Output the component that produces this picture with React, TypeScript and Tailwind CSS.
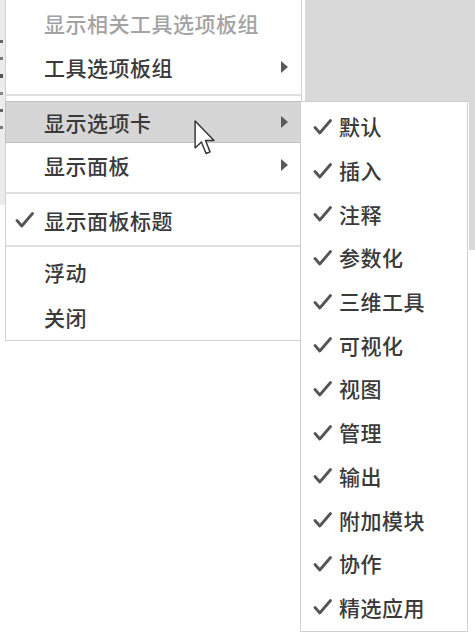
import React from "react";

const font = { fontFamily: '"Noto Sans CJK SC", "Noto Sans", sans-serif' };

function Arrow() {
  return (
    <svg width="7" height="12" viewBox="0 0 7 12" className="shrink-0">
      <path d="M0 0 L7 6 L0 12 Z" fill="#5a5a5a" />
    </svg>
  );
}

function Check() {
  return (
    <svg width="19" height="16" viewBox="0 0 19 16" className="shrink-0">
      <path d="M2 8.5 L6.8 14 L17.5 1.5" fill="none" stroke="#555" strokeWidth="2.8" strokeLinecap="round" strokeLinejoin="round" />
    </svg>
  );
}

function Row({
  label,
  h,
  arrow,
  check,
  muted,
  highlight,
}: {
  label: string;
  h: string;
  arrow?: boolean;
  check?: boolean;
  muted?: boolean;
  highlight?: boolean;
}) {
  return (
    <div
      className={`flex items-center ${h} ${
        highlight ? "bg-[#d6d6d6] border border-[#c2c2c2] mx-[-1px]" : ""
      }`}
    >
      <div className="w-[38px] flex justify-end pr-[10px]">{check ? <Check /> : null}</div>
      <span
        className={`flex-1 text-[21px] leading-none font-medium tracking-[0.5px] ${
          muted ? "text-[#a3a3a3]" : "text-[#3a3a3a]"
        }`}
      >
        {label}
      </span>
      <div className="w-[20px] flex items-center">{arrow ? <Arrow /> : null}</div>
    </div>
  );
}

function Sep({ h }: { h: string }) {
  return (
    <div className={`${h} flex items-center`}>
      <div className="h-[2px] w-full bg-[#e0e0e0]" />
    </div>
  );
}

const subItems = [
  "默认",
  "插入",
  "注释",
  "参数化",
  "三维工具",
  "可视化",
  "视图",
  "管理",
  "输出",
  "附加模块",
  "协作",
  "精选应用",
];

export default function App() {
  return (
    <div className="relative w-[475px] h-[639px] bg-white overflow-hidden" style={font}>
      {/* background behind menus */}
      <div className="flex h-[250px]">
        <div className="w-[5px] bg-[#ececec] h-[205px] flex flex-col gap-[14px] pt-[40px]">
          <div className="h-[3px] w-[3px] bg-[#666]" />
          <div className="h-[3px] w-[3px] bg-[#777]" />
          <div className="h-[4px] w-[3px] bg-[#555]" />
          <div className="h-[3px] w-[3px] bg-[#888]" />
          <div className="h-[3px] w-[3px] bg-[#666]" />
          <div className="h-[3px] w-[3px] bg-[#777]" />
        </div>
        <div className="flex-1" />
        <div className="w-[170px] flex flex-col">
          <div className="h-[102px] bg-[#d9d9d9]" />
          <div className="flex flex-1">
            <div className="flex-1" />
            <div className="w-[6px] bg-[#d9d9d9]" />
          </div>
        </div>
      </div>

      {/* main menu */}
      <div className="absolute left-[5px] top-0 w-[297px] bg-white border-l border-r border-b border-[#d2d2d2] flex flex-col">
        <div className="h-[1px]" />
        <Row label="显示相关工具选项板组" h="h-[44px]" muted />
        <Row label="工具选项板组" h="h-[44px]" arrow />
        <Sep h="h-[12px]" />
        <Row label="显示选项卡" h="h-[42px]" arrow highlight />
        <Row label="显示面板" h="h-[44px]" arrow />
        <Sep h="h-[11px]" />
        <Row label="显示面板标题" h="h-[44px]" check />
        <Sep h="h-[8px]" />
        <Row label="浮动" h="h-[44px]" />
        <Row label="关闭" h="h-[46px]" />
      </div>

      {/* submenu */}
      <div className="absolute left-[300px] top-[101px] w-[168px] bg-white border border-[#cfcfcf] pt-[3px] pb-[2px] flex flex-col">
        {subItems.map((s) => (
          <div key={s} className="h-[43.7px] flex items-center">
            <div className="w-[38px] flex justify-end pr-[7px]">
              <Check />
            </div>
            <span className="text-[21px] leading-none font-medium text-[#3a3a3a] tracking-[0.5px]">{s}</span>
          </div>
        ))}
      </div>

      {/* cursor */}
      <svg
        className="absolute left-[194px] top-[120px]"
        width="22"
        height="36"
        viewBox="0 0 12 20"
      >
        <path
          d="M0.5 0.5 L0.5 15.5 L4 12.2 L6.6 18.6 L8.8 17.7 L6.3 11.4 L11 11.4 Z"
          fill="#ffffff"
          stroke="#333"
          strokeWidth="0.8"
          strokeLinejoin="round"
        />
      </svg>
    </div>
  );
}
